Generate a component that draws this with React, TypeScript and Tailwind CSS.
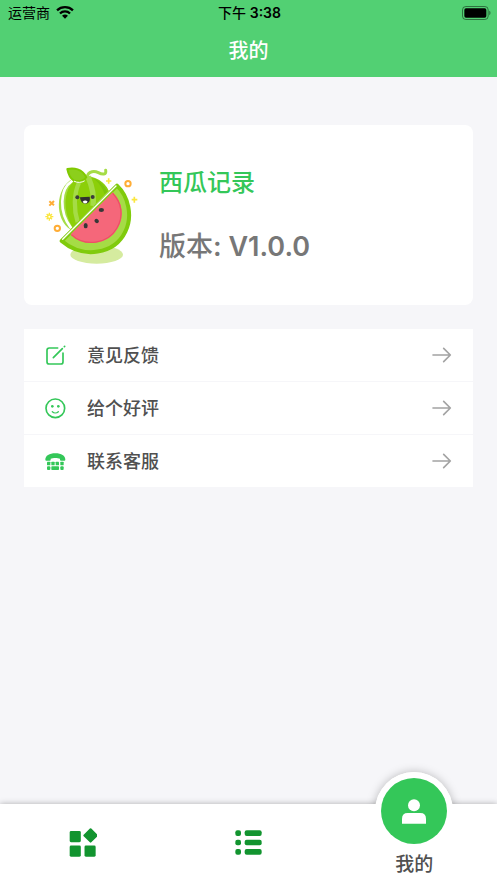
import React from 'react';

function WifiIcon() {
  return (
    <svg viewBox="0 0 54 40" className="w-[18px] h-[13px]" fill="none" stroke="#000" strokeWidth="7" aria-hidden="true">
      <path d="M2.500 13.500C16 0.500 38 0.500 51.500 13.500" />
      <path d="M11.500 23C20 14.500 34 14.500 42.500 23" />
      <path d="M18 30C23 25 31 25 36 30L27 39Z" fill="#000" stroke="none" />
    </svg>
  );
}

function BatteryIcon() {
  return (
    <svg viewBox="0 0 87 42" className="w-[29px] h-[14px]" aria-hidden="true">
      <rect x="1.500" y="1.500" width="77" height="39" rx="10" fill="none" stroke="#000" strokeOpacity="0.450" strokeWidth="3" />
      <rect x="7" y="7" width="66" height="28" rx="5" fill="#000" />
      <path d="M82 14.500C86.500 16 86.500 26 82 27.500Z" fill="#000" fillOpacity="0.500" />
    </svg>
  );
}

function WatermelonLogo() {
  return (
    <svg viewBox="30 27 300 300" className="w-[100px] h-[100px] shrink-0" role="img" aria-label="西瓜记录">
      <ellipse cx="185" cy="296" rx="79" ry="27" fill="#d5eb9f" />

      {/* whole melon */}
      <path d="M107 221C58 190 60 96 113 68C150 48 200 62 221 104Z" fill="#a5dc46" />
      <path d="M110 76C74 99 72 168 107 214" fill="none" stroke="#fff" strokeWidth="8" strokeLinecap="round" />
      <path d="M130 68C84 88 80 164 113 214L221 104C204 70 166 55 130 68Z" fill="#8ccf09" />
      <path d="M132 80C116 115 116 160 128 198" fill="none" stroke="#a5dc46" strokeWidth="13" />
      <path d="M159 62C172 92 178 122 174 150" fill="none" stroke="#a5dc46" strokeWidth="16" />
      <path d="M174 66C198 76 211 94 217 107L209 115C204 98 191 79 174 66Z" fill="#7dc40a" />
      <path d="M156 63C161 43 180 45 190 50C202 56 215 57 212 43" fill="none" stroke="#a5dc46" strokeWidth="9" strokeLinecap="round" />
      <path d="M97 39C116 35 142 38 154 64C146 77 129 78 116 73C105 67 100 54 97 39Z" fill="#8ccf1c" stroke="#80c900" strokeWidth="6" strokeLinejoin="round" />
      <path d="M118 76C127 81 140 80 148 75" fill="none" stroke="#fff" strokeWidth="3" strokeLinecap="round" />

      {/* face */}
      <circle cx="127" cy="124" r="6" fill="#3b3b3b" />
      <circle cx="173" cy="123" r="6" fill="#3b3b3b" />
      <path d="M135 124L164 122C167 134 161 143 151 143C141 143 136 135 135 124Z" fill="#303030" />
      <path d="M143 137C147 132 154 132 158 137L155 141C152 143 148 143 146 141Z" fill="#fff" />

      {/* slice */}
      <path d="M80 255L246 89C280 121 294 180 271 227C239 294 145 310 80 255Z" fill="#a5dc46" stroke="#80cb0c" strokeWidth="12" strokeLinejoin="round" />
      <path d="M107 235L233 109C262 139 269 179 248 217C220 268 149 276 107 235Z" fill="#f5677a" />
      <path d="M233 112C260 140 267 179 246 216C218 265 149 273 109 236" fill="none" stroke="#ee5065" strokeWidth="4" />
      <path d="M83 250L243 90" stroke="#fff" strokeWidth="4" strokeLinecap="round" />
      <ellipse cx="199" cy="162" rx="8" ry="6" fill="#373737" />
      <ellipse cx="185" cy="195" rx="7" ry="6" transform="rotate(40 185 195)" fill="#373737" />
      <ellipse cx="152" cy="209" rx="6" ry="8" fill="#373737" />

      {/* sparkles */}
      <g fill="none" stroke="#ffad36" strokeWidth="6">
        <circle cx="279" cy="83" r="8" />
        <circle cx="67" cy="217" r="8" />
        <path d="M43 136L57 148M57 135L43 149" />
      </g>
      <g stroke="#fbe63f" strokeWidth="5">
        <path d="M213 75H229M221 67V83M290 131H307M298 122V140" />
        <path d="M31 182H55M43 170V194M35 174L51 190M51 174L35 190" strokeWidth="4" />
      </g>
      <circle cx="43" cy="182" r="5" fill="#fff" stroke="#fbe63f" strokeWidth="4" />
    </svg>
  );
}

function FeedbackIcon() {
  return (
    <svg viewBox="0 0 63 63" className="w-[21px] h-[21px]" fill="none" stroke="#34c759" strokeWidth="5" strokeLinecap="round" aria-hidden="true">
      <path d="M38 9H13Q6 9 6 16V50Q6 57 13 57H47Q54 57 54 50V24" />
      <path d="M25 38L52 11" />
      <path d="M58 5L59 4" />
    </svg>
  );
}

function SmileIcon() {
  return (
    <svg viewBox="0 0 63 63" className="w-[21px] h-[21px]" fill="none" stroke="#34c759" strokeWidth="5" strokeLinecap="round" aria-hidden="true">
      <circle cx="31" cy="31" r="28" />
      <path d="M22 41C27 46 35 46 40 41" strokeWidth="4" />
      <circle cx="22" cy="25" r="4" fill="#34c759" stroke="none" />
      <circle cx="40" cy="25" r="4" fill="#34c759" stroke="none" />
    </svg>
  );
}

function PhoneIcon() {
  return (
    <svg viewBox="0 0 63 63" className="w-[21px] h-[21px]" fill="#34c759" aria-hidden="true">
      <path d="M1 26C1 14 13 7 31 7S61 14 61 26Q61 29 58 29H48Q45 29 45 26V23C38 20 24 20 17 23V26Q17 29 14 29H4Q1 29 1 26Z" />
      <rect x="6" y="32" width="10" height="11" rx="2" />
      <rect x="19" y="32" width="10" height="11" rx="2" />
      <rect x="32" y="32" width="10" height="11" rx="2" />
      <rect x="46" y="32" width="10" height="11" rx="2" />
      <rect x="6" y="46" width="10" height="11" rx="3" />
      <rect x="19" y="46" width="23" height="11" rx="2" />
      <rect x="46" y="46" width="10" height="11" rx="3" />
    </svg>
  );
}

function ArrowIcon() {
  return (
    <svg viewBox="0 0 60 48" className="w-5 h-4" fill="none" stroke="#a3a3a3" strokeWidth="5" strokeLinecap="round" strokeLinejoin="round" aria-hidden="true">
      <path d="M3 24H55M35 4L55 24L35 44" />
    </svg>
  );
}

const menu = [
  { label: '意见反馈', Icon: FeedbackIcon },
  { label: '给个好评', Icon: SmileIcon },
  { label: '联系客服', Icon: PhoneIcon },
];

function TabBar() {
  return (
    <nav className="relative grid grid-cols-3 h-[79px] bg-white shadow-[0_0_6px_rgba(0,0,0,0.3)]">
      <button type="button" aria-label="首页" className="flex items-center justify-center pb-0.5">
        <svg viewBox="0 0 86 86" className="w-[29px] h-[29px]" fill="#12942f" aria-hidden="true">
          <rect x="5" y="9" width="33" height="33" rx="4" />
          <rect x="5" y="52" width="33" height="33" rx="4" />
          <rect x="49" y="52" width="33" height="33" rx="4" />
          <rect x="51" y="6" width="32" height="32" rx="3" transform="rotate(45 67 22)" />
        </svg>
      </button>
      <button type="button" aria-label="列表" className="flex items-center justify-center pb-0.5">
        <svg viewBox="0 0 81 81" className="w-[27px] h-[27px]" fill="#12942f" aria-hidden="true">
          <rect x="1" y="4" width="17" height="17" rx="6" />
          <rect x="1" y="32" width="17" height="17" rx="6" />
          <rect x="1" y="60" width="17" height="17" rx="6" />
          <rect x="29" y="4" width="51" height="17" rx="6" />
          <rect x="29" y="32" width="51" height="17" rx="6" />
          <rect x="29" y="60" width="51" height="17" rx="6" />
        </svg>
      </button>
      <button type="button" className="flex flex-col items-center justify-end pb-1">
        <span className="absolute -top-8 -z-10 w-[78px] h-[78px] rounded-full bg-white shadow-[0_0_10px_rgba(0,0,0,0.25)]" />
        <span className="absolute -top-8 w-[78px] h-[78px] rounded-full bg-white p-1.5">
          <span className="flex items-center justify-center w-full h-full rounded-full bg-[#34c759]">
            <svg viewBox="0 0 72 75" className="w-6 h-[25px]" fill="#fff" aria-hidden="true">
              <circle cx="36" cy="19" r="18" />
              <path d="M0 74V59Q0 42 17 42H55Q72 42 72 59V74Z" />
            </svg>
          </span>
        </span>
        <span className="text-[19px] leading-7 font-medium text-[#505050]">我的</span>
      </button>
    </nav>
  );
}

export default function App() {
  return (
    <div className="isolate min-h-screen flex flex-col bg-[#f6f6f9] font-['Inter','Noto_Sans_CJK_SC',sans-serif]">
      <header className="bg-[#52d073]">
        <div className="grid grid-cols-3 items-center h-[25px] pl-2 pr-1.5 text-sm text-black">
          <div className="flex items-center gap-1.5">
            <span>运营商</span>
            <WifiIcon />
          </div>
          <span className="text-center font-medium">
            下午 <span className="font-semibold">3:38</span>
          </span>
          <div className="flex justify-end">
            <BatteryIcon />
          </div>
        </div>
        <h1 className="h-[52px] text-center text-xl leading-[52px] font-medium text-white">我的</h1>
      </header>

      <main className="grow px-6 pt-12 pb-8">
        <section className="flex items-center gap-3.5 h-[180px] pl-[21px] rounded-lg bg-white">
          <WatermelonLogo />
          <div className="flex flex-col gap-8">
            <h2 className="text-2xl leading-8 font-medium text-[#34c759]">西瓜记录</h2>
            <p className="text-[27px] leading-8 font-medium text-[#777777]">
              版本<span className="font-semibold">: V1.0.0</span>
            </p>
          </div>
        </section>

        <ul className="mt-6 bg-white divide-y divide-[#f6f6f9]">
          {menu.map(({ label, Icon }) => (
            <li key={label}>
              <button type="button" className="flex items-center gap-[21px] w-full h-[52px] px-[21px]">
                <Icon />
                <span className="grow pt-0.5 text-left text-lg font-medium text-[#505050]">{label}</span>
                <ArrowIcon />
              </button>
            </li>
          ))}
        </ul>
      </main>

      <TabBar />
    </div>
  );
}
